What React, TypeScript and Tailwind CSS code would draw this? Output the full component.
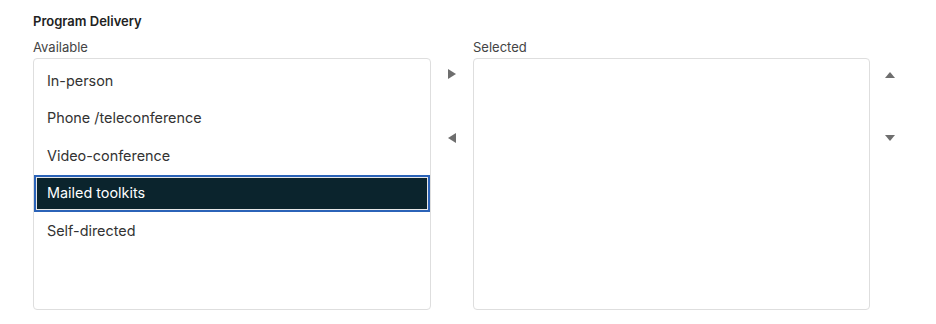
import React from 'react';

const AVAILABLE = ['In-person', 'Phone /teleconference', 'Video-conference', 'Mailed toolkits', 'Self-directed'];

function Tri({ dir }: { dir: 'right' | 'left' | 'up' | 'down' }) {
  const pts = {
    right: '0,0 8,5 0,10',
    left: '8,0 0,5 8,10',
    up: '0,6 5,0 10,6',
    down: '0,0 10,0 5,6',
  }[dir];
  const w = dir === 'up' || dir === 'down' ? 10 : 8;
  const h = dir === 'up' || dir === 'down' ? 6 : 10;
  return (
    <svg width={w} height={h} viewBox={`0 0 ${w} ${h}`} className="block">
      <polygon points={pts} fill="#6e6e6e" />
    </svg>
  );
}

export default function App() {
  const selected = 'Mailed toolkits';
  return (
    <div className="w-[936px] h-[324px] bg-white pl-[33px] pt-[13px] font-['Inter',sans-serif]">
      <h3 className="text-[13px] leading-4 font-semibold text-[#222]">Program Delivery</h3>

      <div className="flex mt-[10px]">
        {/* Available list */}
        <div className="w-[398px]">
          <div className="text-[13px] leading-4 text-[#444] mb-[3px]">Available</div>
          <ul className="h-[252px] border border-[#dedede] rounded-[4px] pt-[3px]">
            {AVAILABLE.map((item) => (
              <li
                key={item}
                className={
                  item === selected
                    ? 'h-[37.5px] border-2 border-[#2b63b8] flex'
                    : 'h-[37.5px] flex items-center px-[13px] text-[14.4px] text-[#333]'
                }
              >
                {item === selected ? (
                  <div className="flex-1 border border-[#e8e8e8] bg-[#0b242d] flex items-center px-[10px] text-[14.4px] text-white">
                    {item}
                  </div>
                ) : (
                  item
                )}
              </li>
            ))}
          </ul>
        </div>

        {/* Move buttons */}
        <div className="w-[42px] pt-[21px] flex flex-col items-center">
          <button className="h-[27px] flex items-center justify-center">
            <Tri dir="right" />
          </button>
          <button className="mt-[37px] h-[27px] flex items-center justify-center">
            <Tri dir="left" />
          </button>
        </div>

        {/* Selected list */}
        <div className="w-[397px]">
          <div className="text-[13px] leading-4 text-[#444] mb-[3px]">Selected</div>
          <ul className="h-[252px] border border-[#dedede] rounded-[4px]" />
        </div>

        {/* Order buttons */}
        <div className="w-[40px] pt-[22px] flex flex-col items-center">
          <button className="h-[27px] flex items-center justify-center">
            <Tri dir="up" />
          </button>
          <button className="mt-[36px] h-[27px] flex items-center justify-center">
            <Tri dir="down" />
          </button>
        </div>
      </div>
    </div>
  );
}
